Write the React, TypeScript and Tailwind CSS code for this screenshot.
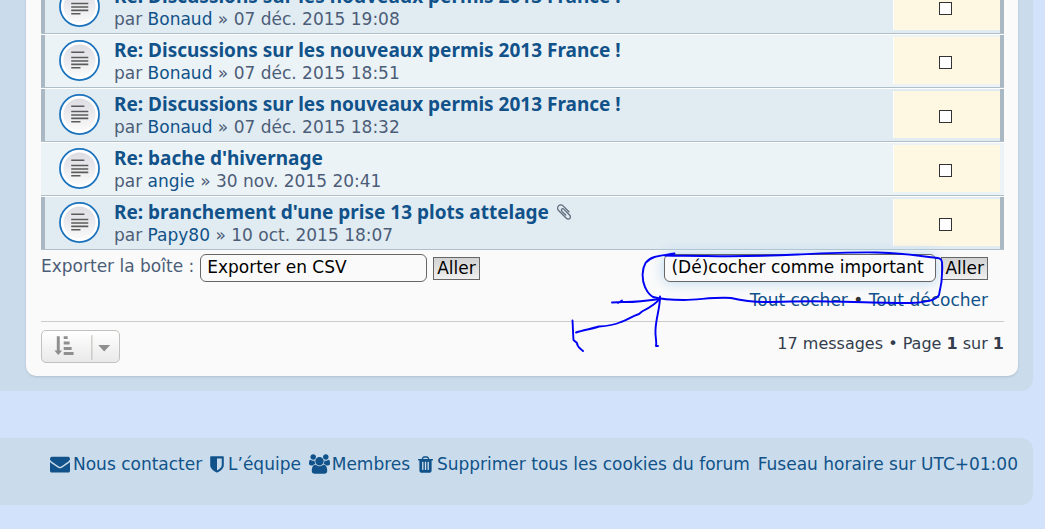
import { useState } from "react";

type Message = {
  id: number;
  subject: string;
  author: string;
  date: string;
  marked: boolean;
  attachment?: boolean;
};

const messages: Message[] = [
  { id: 1, subject: "Re: Discussions sur les nouveaux permis 2013 France !", author: "Bonaud", date: "07 déc. 2015 19:08", marked: true },
  { id: 2, subject: "Re: Discussions sur les nouveaux permis 2013 France !", author: "Bonaud", date: "07 déc. 2015 18:51", marked: true },
  { id: 3, subject: "Re: Discussions sur les nouveaux permis 2013 France !", author: "Bonaud", date: "07 déc. 2015 18:32", marked: true },
  { id: 4, subject: "Re: bache d'hivernage", author: "angie", date: "30 nov. 2015 20:41", marked: false },
  { id: 5, subject: "Re: branchement d'une prise 13 plots attelage", author: "Papy80", date: "10 oct. 2015 18:07", marked: true, attachment: true },
];

const icons = {
  envelope: {
    viewBox: "0 0 1792 1792",
    path: "M1792 710v794q0 66-47 113t-113 47h-1472q-66 0-113-47t-47-113v-794q44 49 101 87 362 246 497 345 57 42 92.5 65.5t94.5 48 110 24.5h2q51 0 110-24.5t94.5-48 92.5-65.5q170-123 498-345 57-39 100-87zm0-294q0 79-49 151t-122 123q-376 261-468 325-10 7-42.5 30.5t-54 38-52 32.5-57.5 27-50 9h-2q-23 0-50-9t-57.5-27-52-32.5-54-38-42.5-30.5q-91-64-262-182.5t-205-142.5q-62-42-117-115.5t-55-136.5q0-78 41.5-130t118.5-52h1472q65 0 112.5 47t47.5 113z",
  },
  shield: {
    viewBox: "256 0 1280 1792",
    path: "M1344 960v-640h-448v1137q119-63 213-137 235-184 235-360zm192-768v768q0 86-33.5 170.5t-83 150-118 127.5-126.5 103-121 77.5-89.5 49.5-42.5 20q-12 6-26 6t-26-6q-16-7-42.5-20t-89.5-49.5-121-77.5-126.5-103-118-127.5-83-150-33.5-170.5v-768q0-26 19-45t45-19h1152q26 0 45 19t19 45z",
  },
  group: {
    viewBox: "0 0 1920 1792",
    path: "M593 896q-162 5-265 128h-134q-82 0-138-40.5t-56-118.5q0-353 124-353 6 0 43.5 21t97.5 42.5 119 21.5q67 0 133-23-5 37-5 66 0 139 81 256zm1071 637q0 120-73 189.5t-194 69.5h-874q-121 0-194-69.5t-73-189.5q0-53 3.5-103.5t14-109 26.5-108.5 43-97.5 62-81 85.5-53.5 111.5-20q10 0 43 21.5t73 48 107 48 135 21.5 135-21.5 107-48 73-48 43-21.5q61 0 111.5 20t85.5 53.5 62 81 43 97.5 26.5 108.5 14 109 3.5 103.5zm-1024-1277q0 106-75 181t-181 75-181-75-75-181 75-181 181-75 181 75 75 181zm704 384q0 159-112.5 271.5t-271.5 112.5-271.5-112.5-112.5-271.5 112.5-271.5 271.5-112.5 271.5 112.5 112.5 271.5zm576 225q0 78-56 118.5t-138 40.5h-134q-103-123-265-128 81-117 81-256 0-29-5-66 66 23 133 23 59 0 119-21.5t97.5-42.5 43.5-21q124 0 124 353zm-128-609q0 106-75 181t-181 75-181-75-75-181 75-181 181-75 181 75 75 181z",
  },
  trash: {
    viewBox: "192 0 1408 1792",
    path: "M704 1376v-704q0-14-9-23t-23-9h-64q-14 0-23 9t-9 23v704q0 14 9 23t23 9h64q14 0 23-9t9-23zm256 0v-704q0-14-9-23t-23-9h-64q-14 0-23 9t-9 23v704q0 14 9 23t23 9h64q14 0 23-9t9-23zm256 0v-704q0-14-9-23t-23-9h-64q-14 0-23 9t-9 23v704q0 14 9 23t23 9h64q14 0 23-9t9-23zm-544-992h448l-48-117q-7-9-17-11h-317q-10 2-17 11zm928 32v64q0 14-9 23t-23 9h-96v948q0 83-47 143.5t-113 60.5h-832q-66 0-113-58.5t-47-141.5v-952h-96q-14 0-23-9t-9-23v-64q0-14 9-23t23-9h309l70-167q15-37 54-63t79-26h320q40 0 79 26t54 63l70 167h309q14 0 23 9t9 23z",
  },
  paperclip: {
    viewBox: "0 0 1792 1792",
    path: "M1596 1385q0 117-79 196t-196 79q-135 0-235-100l-777-776q-113-115-113-271 0-159 110-270t269-111q158 0 273 113l605 606q10 10 10 22 0 16-30.5 46.5t-46.5 30.5q-13 0-23-10l-606-607q-79-77-181-77-106 0-179 75t-73 181q0 105 76 181l776 777q63 63 145 63 64 0 106-42t42-106q0-82-63-145l-581-581q-26-24-60-24-29 0-48 19t-19 48q0 32 25 59l410 410q10 10 10 22 0 16-31 47t-47 31q-12 0-22-10l-410-410q-63-61-63-149 0-82 57-139t139-57q88 0 149 63l581 581q100 98 100 235z",
  },
};

function Icon({ name, className }: { name: keyof typeof icons; className: string }) {
  return (
    <svg viewBox={icons[name].viewBox} fill="currentColor" className={className} aria-hidden="true">
      <path d={icons[name].path} />
    </svg>
  );
}

function TopicIcon() {
  return (
    <svg viewBox="0 0 42 42" className="h-[41px] w-[41px] shrink-0" aria-hidden="true">
      <defs>
        <linearGradient id="disc" x1="0" y1="0" x2="0" y2="1">
          <stop offset="0" stopColor="#dcdce2" />
          <stop offset="1" stopColor="#fafafa" />
        </linearGradient>
      </defs>
      <circle cx="21" cy="21" r="20" fill="#fff" stroke="#1a72bd" strokeWidth="1.8" />
      <circle cx="21" cy="21" r="16.5" fill="url(#disc)" />
      <path
        d="M12.5 12.5H26M12.5 18H30M12.5 21.5H30M12.5 25H30M12.5 28.5H22"
        stroke="#5b5b5b"
        strokeWidth="1.6"
      />
    </svg>
  );
}

function MessageRow({
  message,
  shaded,
  checked,
  onToggle,
}: {
  message: Message;
  shaded: boolean;
  checked: boolean;
  onToggle: () => void;
}) {
  return (
    <li
      className={`flex h-[54px] border-t border-b border-t-white border-b-[#b0bec7] ${
        shaded ? "bg-[#e1ebf2]" : "bg-[#ecf3f7]"
      }`}
    >
      <div className={`w-1 shrink-0 ${message.marked ? "bg-[#aab8c4]" : ""}`} />
      <div className="flex min-w-0 grow items-center gap-3.5 pb-px pl-3.5">
        <TopicIcon />
        <div className="min-w-0">
          <div className="flex items-center gap-1.5 leading-6">
            <a href="#message" className="truncate font-['Noto_Sans'] text-[19px] font-bold text-[#105289]">
              {message.subject}
            </a>
            {message.attachment ? (
              <Icon name="paperclip" className="h-[18px] w-[18px] shrink-0 text-[#606c7c]" />
            ) : null}
          </div>
          <p className="truncate leading-[22px]">
            par{" "}
            <a href="#author" className="text-[#105289]">
              {message.author}
            </a>{" "}
            » {message.date}
          </p>
        </div>
      </div>
      <div className="mt-0.5 mb-[3px] flex w-[107px] shrink-0 items-center justify-center border-l border-white bg-[#fef7e2] pt-1 pr-[3px]">
        <input
          type="checkbox"
          aria-label={`Sélectionner ${message.subject}`}
          checked={checked}
          onChange={onToggle}
          className="h-[13px] w-[13px] appearance-none border border-[#333] bg-white checked:bg-[#105289]"
        />
      </div>
      <div className={`w-1 shrink-0 ${message.marked ? "bg-[#aab8c4]" : ""}`} />
    </li>
  );
}

function GoButton() {
  return (
    <button
      type="button"
      className="h-[23px] border border-[#666] bg-linear-to-b from-[#d2d2d2] to-[#efefef] px-[3px] leading-5 text-black"
    >
      Aller
    </button>
  );
}

export default function App() {
  const [selected, setSelected] = useState<number[]>([]);

  const toggle = (id: number) =>
    setSelected((current) =>
      current.includes(id) ? current.filter((item) => item !== id) : [...current, id],
    );

  return (
    <div className="min-h-screen overflow-hidden bg-[#d3e2fb] pr-3 font-['DejaVu_Sans',sans-serif] text-[17px] text-[#4c5d77]">
      <div className="-mt-5 rounded-br-xl bg-[#cadceb] pr-[15px] pb-[15px] pl-[26px]">
        <main className="rounded-b-[10px] bg-[#fafafa] pr-3.5 pb-[13px] pl-[15px] shadow-sm">
          <ul>
            {messages.map((message, index) => (
              <MessageRow
                key={message.id}
                message={message}
                shaded={index % 2 === 0}
                checked={selected.includes(message.id)}
                onToggle={() => toggle(message.id)}
              />
            ))}
          </ul>

          <div className="flex items-start justify-between border-b border-[#ccc] pt-1 pr-4 pb-2.5">
            <div className="flex items-center gap-1.5">
              <label htmlFor="export" className="pb-1 leading-6">
                Exporter la boîte :
              </label>
              <select
                id="export"
                className="h-7 w-[227px] appearance-none rounded-md border border-[#666] bg-[#fafafa] px-1.5 text-black"
              >
                <option>Exporter en CSV</option>
              </select>
              <GoButton />
            </div>

            <div className="relative">
              <div className="flex items-center gap-[5px]">
                <select
                  aria-label="Action sur la sélection"
                  className="h-7 w-[272px] appearance-none rounded-md border border-[#666] bg-[#fafafa] px-1.5 text-black shadow-[0_0_14px_#b5d6ee]"
                >
                  <option>(Dé)cocher comme important</option>
                </select>
                <GoButton />
              </div>
              <p className="mt-[7px] text-right leading-[22px]">
                <button
                  type="button"
                  className="text-[#105289]"
                  onClick={() => setSelected(messages.map((message) => message.id))}
                >
                  Tout cocher
                </button>{" "}
                <span className="text-[#333]">•</span>{" "}
                <button type="button" className="text-[#105289]" onClick={() => setSelected([])}>
                  Tout décocher
                </button>
              </p>
              {/* pen drawing: a loop round the action menu with an arrow to it */}
              <svg
                viewBox="570 250 376 102"
                className="pointer-events-none absolute -top-1 -left-[94px] h-[102px] w-[376px]"
                fill="none"
                stroke="#0000f5"
                strokeWidth="1.9"
                strokeLinecap="round"
                strokeLinejoin="round"
                aria-hidden="true"
              >
                <path d="M674.5 253.5C661 256 651 255.5 645.5 263C642 269 641.5 279 645 287C647 291 648 294 653 297C660 299 674 300 684 300C701 299.5 715 297 731 298C740 300 751 302 765 302C790 302 804 300.5 829 301.5C861 302 885 303 911 303C926 302 935 301 939 295C941 287 943 275 942 262C941 257 937 258 929 257C915 255 899 253 877 252.5C851 252 820 253.5 798 254.5C767 256 735 256.5 706 256C691 255.5 677 256 665 255.5" />
                <path d="M660 299C646 301 635 302.5 622 302L612 302.5M622 300.5L618 303" />
                <path d="M660 298C657 303 651 307 642 311.5L639 314C630 317 628 320 621 322C614 325 608 326 599 326.5C591 329 584 330 576 332.5" />
                <path d="M660 296.5C660 309 656 317 655.5 330C655 337 657 341 656 346L658 346" />
                <path d="M572.5 320.5C573 329 573 334 573.5 340L577 343C577 347 580 348 583 351" />
              </svg>
            </div>
          </div>

          <div className="flex items-start justify-between pt-2">
            <button
              type="button"
              aria-label="Options d'affichage et de tri"
              className="flex h-[33px] w-[79px] items-center rounded-[5px] border border-[#c1c1bd] bg-linear-to-b from-white to-[#e9e9e9] text-[#8f8f8f]"
            >
              <svg viewBox="0 0 78 31" fill="currentColor" className="h-[31px] w-[78px]" aria-hidden="true">
                <path d="M15 5h3v14.5h2.5L16.5 24l-4-4.5H15zM22 5h4v3h-4zM22 10.500h6v3h-6zM22 16h8v3h-8zM22 21h10v3h-10zM57 14h12l-6 6.5z" />
                <path d="M50.5 4v25" stroke="#b9b9b5" />
              </svg>
            </button>
            <p className="pt-[3px] text-[16px] leading-[22px] text-[#333d4d]">
              17 messages • Page <strong>1</strong> sur <strong>1</strong>
            </p>
          </div>
        </main>
      </div>

      <footer className="mt-[47px] flex h-[67px] items-start justify-between rounded-r-xl bg-[#cadceb] pt-[15px] pr-[15px] pl-[50px] leading-[22px] whitespace-nowrap text-[#105289]">
        <a href="#contact" className="flex items-center gap-[3px]">
          <Icon name="envelope" className="h-5 w-5" />
          Nous contacter
        </a>
        <a href="#equipe" className="flex items-center gap-1">
          <Icon name="shield" className="h-[19px] w-3.5" />
          L’équipe
        </a>
        <a href="#membres" className="flex items-center gap-0.5">
          <Icon name="group" className="h-5 w-[21px]" />
          Membres
        </a>
        <a href="#cookies" className="flex items-center gap-1">
          <Icon name="trash" className="h-[19px] w-[15px]" />
          Supprimer tous les cookies du forum
        </a>
        <span>Fuseau horaire sur UTC+01:00</span>
      </footer>
    </div>
  );
}
